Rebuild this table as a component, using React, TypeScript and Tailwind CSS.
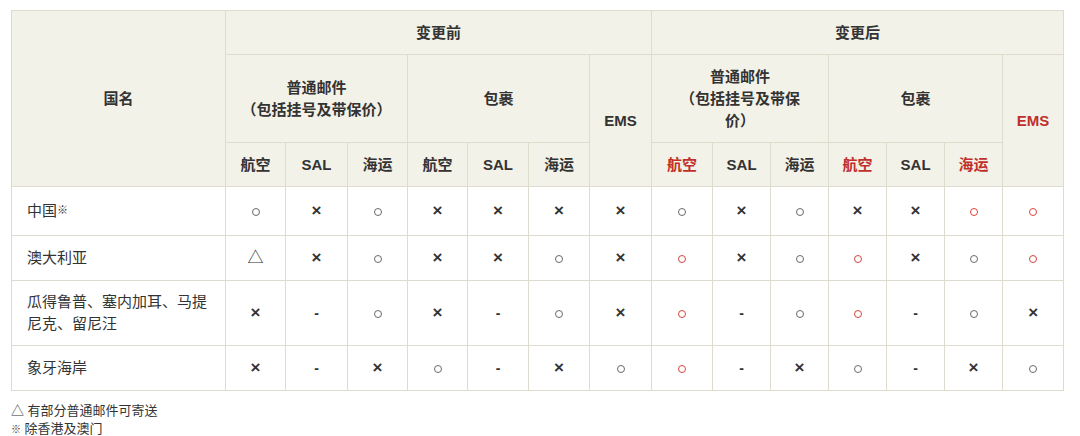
import React from "react";

type Cell = "o" | "or" | "x" | "-" | "t";

const rows: { name: React.ReactNode; cells: Cell[]; h: string }[] = [
  {
    name: (
      <>
        中国<sup className="text-[11px] font-bold relative -top-[2px]">※</sup>
      </>
    ),
    cells: ["o", "x", "o", "x", "x", "x", "x", "o", "x", "o", "x", "x", "or", "or"],
    h: "h-[49px]",
  },
  {
    name: "澳大利亚",
    cells: ["t", "x", "o", "x", "x", "o", "x", "or", "x", "o", "or", "x", "o", "or"],
    h: "h-[45px]",
  },
  {
    name: (
      <>
        瓜得鲁普、塞内加耳、马提
        <br />
        尼克、留尼汪
      </>
    ),
    cells: ["x", "-", "o", "x", "-", "o", "x", "or", "-", "o", "or", "-", "o", "x"],
    h: "h-[65px]",
  },
  {
    name: "象牙海岸",
    cells: ["x", "-", "x", "o", "-", "x", "o", "or", "-", "x", "o", "-", "x", "o"],
    h: "h-[45px]",
  },
];

function Sym({ c }: { c: Cell }) {
  if (c === "o")
    return <span className="inline-block w-[8px] h-[8px] rounded-full border-[1.3px] border-[#6a6a6a] align-middle" />;
  if (c === "or")
    return <span className="inline-block w-[8px] h-[8px] rounded-full border-[1.3px] border-[#d9443d] align-middle" />;
  if (c === "x") return <span className="text-[17px] font-bold text-[#333]">×</span>;
  if (c === "-") return <span className="text-[14px] font-bold text-[#333]">-</span>;
  return <span className="text-[16px] text-[#333]">△</span>;
}

const th = "border border-[#dedccd] bg-[#f3f2e8] font-bold text-[15px] leading-[22px] text-[#333] text-center align-middle p-0";
const td = "border border-[#dedccd] bg-white text-center align-middle p-0";
const red = "text-[#c0302b]";

export default function App() {
  return (
    <div
      className="w-[1080px] h-[436px] bg-white pl-[11px] pt-[10px]"
      style={{ fontFamily: '"Liberation Sans", "Noto Sans CJK SC", sans-serif' }}
    >
      <table className="table-fixed border-collapse w-[1052px]">
        <colgroup>
          <col className="w-[214px]" />
          <col className="w-[60px]" />
          <col className="w-[62px]" />
          <col className="w-[60px]" />
          <col className="w-[60px]" />
          <col className="w-[61px]" />
          <col className="w-[61px]" />
          <col className="w-[62px]" />
          <col className="w-[61px]" />
          <col className="w-[58px]" />
          <col className="w-[58px]" />
          <col className="w-[58px]" />
          <col className="w-[58px]" />
          <col className="w-[58px]" />
          <col className="w-[61px]" />
        </colgroup>
        <thead>
          <tr className="h-[44px]">
            <th rowSpan={3} className={th}>国名</th>
            <th colSpan={7} className={th}>变更前</th>
            <th colSpan={7} className={th}>变更后</th>
          </tr>
          <tr className="h-[88px]">
            <th colSpan={3} className={th}>
              普通邮件
              <br />
              （包括挂号及带保价）
            </th>
            <th colSpan={3} className={th}>包裹</th>
            <th rowSpan={2} className={th}>EMS</th>
            <th colSpan={3} className={th}>
              <div className="px-[18px]">普通邮件<br />（包括挂号及带保价）</div>
            </th>
            <th colSpan={3} className={th}>包裹</th>
            <th rowSpan={2} className={`${th} ${red}`}>EMS</th>
          </tr>
          <tr className="h-[44px]">
            <th className={th}>航空</th>
            <th className={th}>SAL</th>
            <th className={th}>海运</th>
            <th className={th}>航空</th>
            <th className={th}>SAL</th>
            <th className={th}>海运</th>
            <th className={`${th} ${red}`}>航空</th>
            <th className={th}>SAL</th>
            <th className={th}>海运</th>
            <th className={`${th} ${red}`}>航空</th>
            <th className={th}>SAL</th>
            <th className={`${th} ${red}`}>海运</th>
          </tr>
        </thead>
        <tbody>
          {rows.map((r, i) => (
            <tr key={i} className={r.h}>
              <td className="border border-[#dedccd] bg-white text-left align-middle pl-[15px] pr-[8px] text-[15px] leading-[22px] text-[#333]">
                {r.name}
              </td>
              {r.cells.map((c, j) => (
                <td key={j} className={td}>
                  <Sym c={c} />
                </td>
              ))}
            </tr>
          ))}
        </tbody>
      </table>
      <div className="mt-[11px] text-[13px] leading-[18px] text-[#333]">
        <div>△ 有部分普通邮件可寄送</div>
        <div>
          <span className="text-[10px] font-bold">※</span> 除香港及澳门
        </div>
      </div>
    </div>
  );
}
